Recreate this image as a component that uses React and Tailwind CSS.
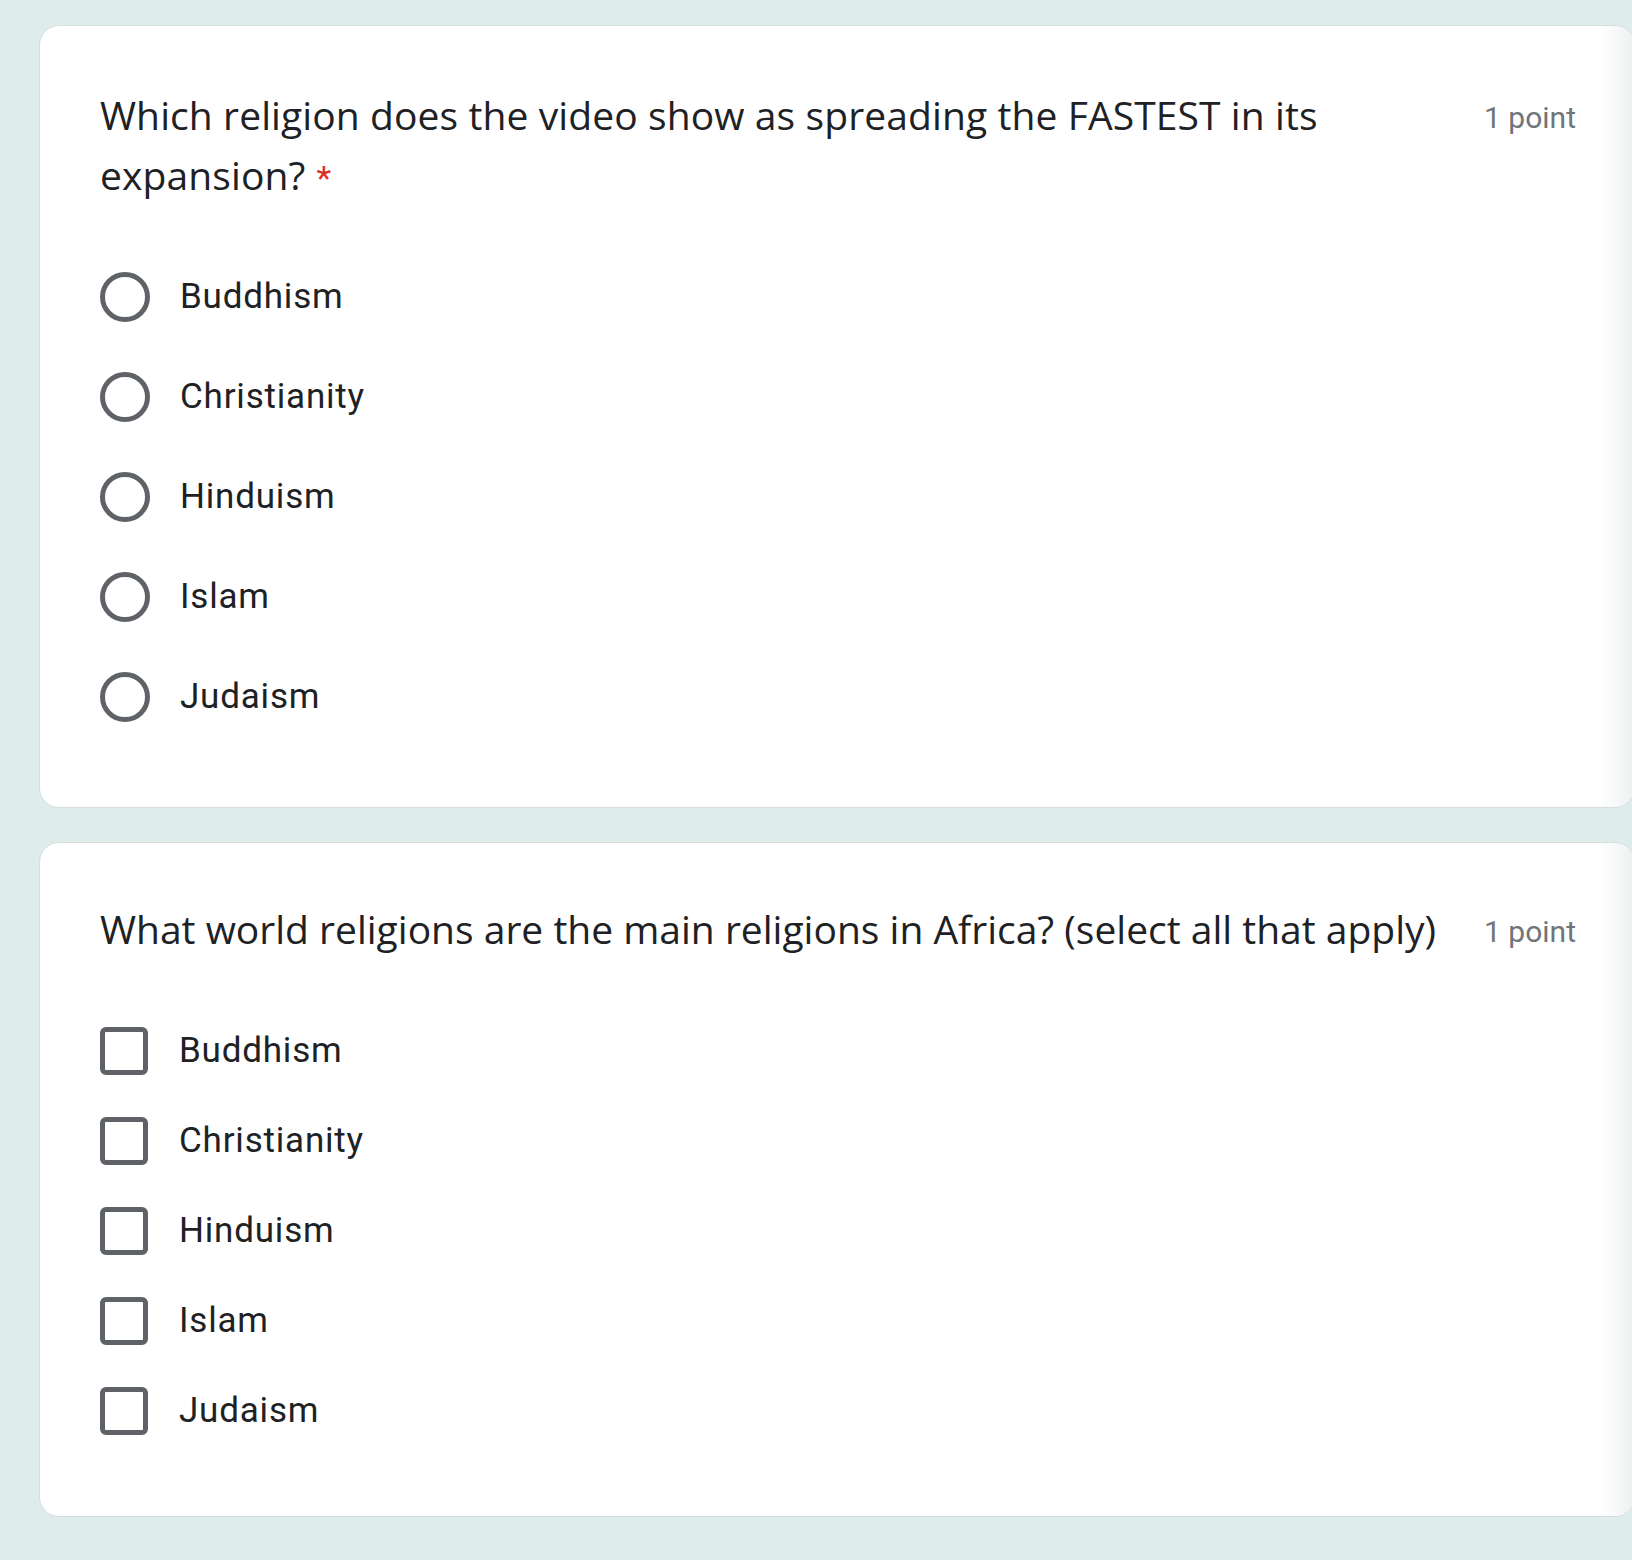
import React from "react";

const options = ["Buddhism", "Christianity", "Hinduism", "Islam", "Judaism"];

function Radio() {
  return <div className="w-[50px] h-[50px] rounded-full border-[5px] border-[#5f6368] shrink-0" />;
}

function Check() {
  return <div className="w-[48px] h-[48px] rounded-[6px] border-[5px] border-[#5f6368] shrink-0" />;
}

function Card({ children, pt }) {
  return (
    <div className={"relative ml-[39px] mr-[-3px] bg-white rounded-[20px] border border-[#d5dddd] pl-[60px] pr-[58px] pb-[60px] overflow-hidden " + pt}>
      {children}
      <div className="absolute right-0 top-0 bottom-0 w-[34px] bg-gradient-to-r from-transparent to-[#eef1f1]" />
    </div>
  );
}

export default function App() {
  const qFont = { fontFamily: '"Open Sans", "Noto Sans", sans-serif' };
  return (
    <div className="w-[1632px] h-[1560px] bg-[#deecec] pt-[25px] overflow-hidden" style={{ fontFamily: "Roboto, sans-serif" }}>
      <Card pt="pt-[59px]">
        <div className="flex items-start">
          <div className="flex-1 text-[39px] leading-[60px] text-[#202124] tracking-[0.1px]" style={qFont}>
            Which religion does the video show as spreading the FASTEST in its
            <br />
            expansion?<span className="ml-[11px] text-[#d93025] text-[34px]" style={{ fontFamily: "Roboto, sans-serif" }}>*</span>
          </div>
          <div className="shrink-0 ml-[40px] mt-[3px] text-[30px] leading-[60px] text-[#70757a]">1 point</div>
        </div>
        <div className="mt-[39px] flex flex-col">
          {options.map((o) => (
            <div key={o} className="h-[100px] flex items-center">
              <Radio />
              <span className="ml-[30px] text-[35px] tracking-[0.8px] text-[#202124]">{o}</span>
            </div>
          ))}
        </div>
      </Card>
      <div className="h-[34px]" />
      <Card pt="pt-[56px]">
        <div className="flex items-start">
          <div className="flex-1 text-[39px] leading-[60px] text-[#202124]" style={qFont}>
            What world religions are the main religions in Africa? (select all that apply)
          </div>
          <div className="shrink-0 ml-[40px] mt-[3px] text-[30px] leading-[60px] text-[#70757a]">1 point</div>
        </div>
        <div className="mt-[44px] flex flex-col">
          {options.map((o) => (
            <div key={o} className="h-[90px] flex items-center">
              <Check />
              <span className="ml-[31px] text-[35px] tracking-[0.8px] text-[#202124]">{o}</span>
            </div>
          ))}
        </div>
      </Card>
    </div>
  );
}
